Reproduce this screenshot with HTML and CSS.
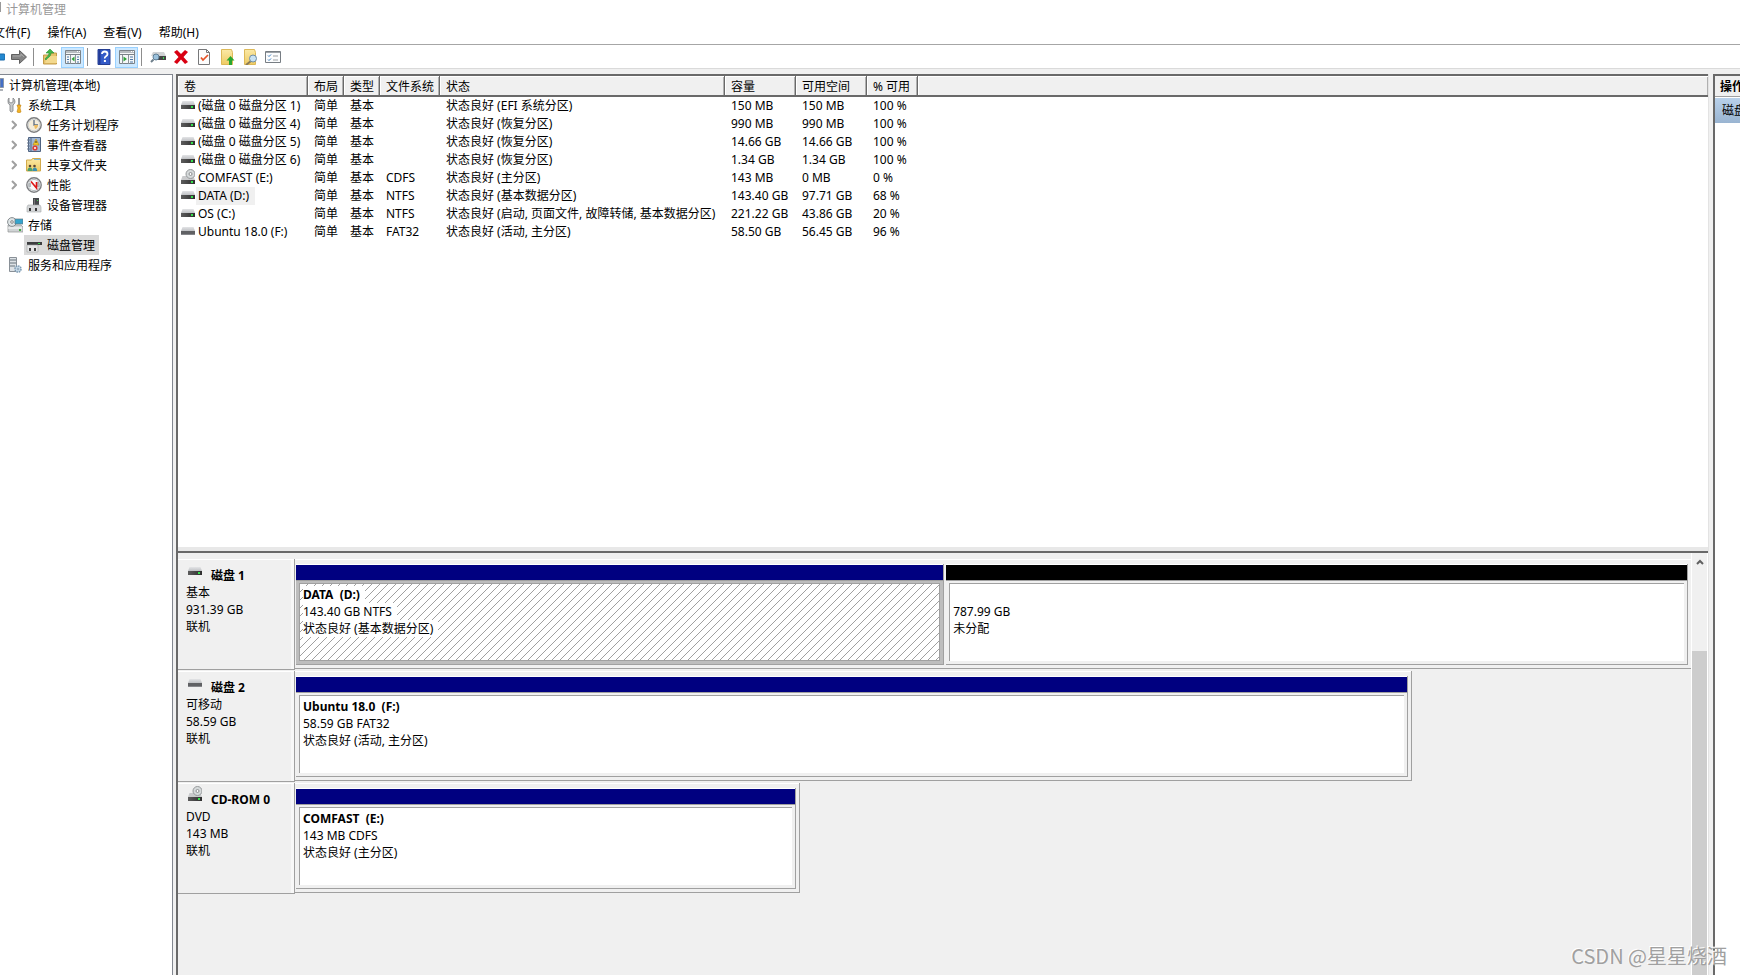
FILE: index.html
```
<!DOCTYPE html>
<html lang="zh-CN">
<head>
<meta charset="utf-8">
<title>计算机管理</title>
<link rel="stylesheet" href="styles.css">
</head>
<body>
<svg class="defs" aria-hidden="true">
  <defs>
    <linearGradient id="metal" x1="0" y1="0" x2="0" y2="1"><stop offset="0" stop-color="#e3e4e6"/><stop offset="1" stop-color="#bfc1c4"/></linearGradient>
    <linearGradient id="folder" x1="0" y1="0" x2="0" y2="1"><stop offset="0" stop-color="#fbe9a6"/><stop offset="1" stop-color="#eecb63"/></linearGradient>
    <linearGradient id="dark" x1="0" y1="0" x2="1" y2="0"><stop offset="0" stop-color="#5d5d5d"/><stop offset="1" stop-color="#2e2e2e"/></linearGradient>
  </defs>
  <symbol id="drive" viewBox="0 0 14 9"><path d="M1.500 0h11L14 4H0z" fill="url(#metal)"/><path d="M0 4h14v4H0z" fill="url(#dark)"/><path d="M10 5h2v2h-2z" fill="#35e04c"/></symbol>
  <symbol id="removable" viewBox="0 0 14 9"><path d="M1.500 0h11L14 4H0z" fill="url(#metal)"/><path d="M0 4h14v4H0z" fill="#606164"/><path d="M0 7h14v1H0z" fill="#85868a"/></symbol>
  <symbol id="cd" viewBox="0 0 14 15"><path d="M1.500 7h11L14 11H0z" fill="#c9cacc"/><circle cx="9.500" cy="5" r="4.500" fill="#d6dadb" stroke="#96999b"/><circle cx="9.500" cy="5" r="1.500" fill="#fff" stroke="#8c8f91"/><path d="M0 11h14v4H0z" fill="url(#dark)"/><path d="M10 12h2v2h-2z" fill="#35e04c"/></symbol>
</svg>

<header class="title"><span class="title-mark"></span><h1>计算机管理</h1></header>
<nav class="menu">
  <button>文件(F)</button><button>操作(A)</button><button>查看(V)</button><button>帮助(H)</button>
</nav>
<div class="toolbar" role="toolbar">
  <button class="tool back" aria-label="后退"><svg viewBox="0 0 16 16"><path d="M8 5h7q1 0 1 1v4q0 1-1 1H8z" fill="#2488cf" stroke="#1769a9"/></svg></button>
  <button class="tool" aria-label="前进"><svg viewBox="0 0 16 16"><path d="M.500 5.500h8v-4L15.500 8l-7 6.500v-4h-8z" fill="#858585" stroke="#606060"/><path d="M2 7h8V5l3 3" fill="none" stroke="#a8a8a8"/></svg></button>
  <span class="sep"></span>
  <button class="tool" aria-label="向上"><svg viewBox="0 0 16 16"><path d="M1.500 15V6h6l1-2h6v11z" fill="#e6c46b" stroke="#c39a48"/><path d="M3 14l2-7h10v7z" fill="#f3d98e"/><path d="M3 10C4 8 7 7 7 4H4l4-4 4 4H9C9 8 6 8 4 11z" fill="#43b649" stroke="#2d9138" stroke-width=".6"/></svg></button>
  <button class="tool on" aria-label="显示/隐藏控制台树"><svg viewBox="0 0 16 14"><path d="M.500.500h15v13H.500z" fill="#f5f7f8" stroke="#7b8288"/><path d="M1 2h14M1 4.500h14" stroke="#7b8288"/><path d="M12 1.500h1M14 1.500h1" stroke="#fff"/><path d="M5.500 5v9M10.500 5v9" stroke="#8b9298"/><path d="M2 7h2M2 9.500h2M2 12h2M12 7h2M12 9.500h2M12 12h2" stroke="#4c78a8"/><path d="M9.500 6.500v5L6.500 9z" fill="#2da337"/></svg></button>
  <span class="sep"></span>
  <button class="tool" aria-label="帮助"><svg viewBox="0 0 13 16"><path d="M.500.500h12v15H.500z" fill="#345bc8" stroke="#253e92"/><path d="M1 1h2v14H1z" fill="#233b96"/><path d="M4.500 5Q4.500 2.500 7.200 2.500T10 5Q10 6.300 8.500 7.200T7.300 9.500" fill="none" stroke="#fff" stroke-width="1.800"/><path d="M6.400 11h2v2h-2z" fill="#fff"/></svg></button>
  <button class="tool on" aria-label="显示/隐藏操作窗格"><svg viewBox="0 0 16 14"><path d="M.500.500h15v13H.500z" fill="#f5f7f8" stroke="#7b8288"/><path d="M1 2h14M1 4.500h14" stroke="#7b8288"/><path d="M12 1.500h1M14 1.500h1" stroke="#fff"/><path d="M9.500 5v9M3.500 5v9" stroke="#8b9298"/><path d="M11 7h3M11 9.500h3M11 12h3" stroke="#4c78a8"/><path d="M4.500 6.500v5L8 9z" fill="#2da337"/></svg></button>
  <span class="sep"></span>
  <button class="tool" aria-label="刷新"><svg viewBox="0 0 16 16"><path d="M3 3h11l2 4H1z" fill="#d0d2d4"/><path d="M5 7h11v4H5z" fill="#444"/><path d="M13 8h1v2h-1z" fill="#35e04c"/><circle cx="6" cy="8" r="3" fill="#9bc1dc" stroke="#5f7f96"/><path d="M3.500 10.500L1 13" stroke="#6e7f8b" stroke-width="2"/></svg></button>
  <button class="tool" aria-label="删除"><svg viewBox="0 0 16 16"><path d="M1 3l3-2 4 4 4-4 3 2-4.500 5L15 13l-3 2-4-4.500L4 15l-3-2 4.500-5z" fill="#d90012"/></svg></button>
  <button class="tool" aria-label="属性"><svg viewBox="0 0 16 16"><path d="M2.500.500h8l3 3v12h-11z" fill="#fdfdfd" stroke="#77787a"/><path d="M10.500.500v3h3" fill="none" stroke="#77787a"/><path d="M5 8.500L7 11l5-5" fill="none" stroke="#e65428" stroke-width="1.700"/></svg></button>
  <button class="tool" aria-label="打开"><svg viewBox="0 0 16 16"><path d="M2.500.500h10l1 3v12h-11z" fill="url(#folder)" stroke="#ddb958"/><path d="M11.500 7l4 4.500h-2.500V16h-3v-4.500H7.500z" fill="#28a52e"/></svg></button>
  <button class="tool" aria-label="浏览"><svg viewBox="0 0 16 16"><path d="M2.500.500h10l1 3v12h-11z" fill="url(#folder)" stroke="#ddb958"/><path d="M9 12l-5 4" stroke="#8b7b58" stroke-width="2"/><circle cx="11" cy="9.500" r="3.500" fill="#c8e2f4" stroke="#6f8ea5"/></svg></button>
  <button class="tool" aria-label="选项"><svg viewBox="0 0 16 14"><path d="M.500 1.500h15v11H.500z" fill="#fbfcfd" stroke="#777d83"/><path d="M1 2.500h14" stroke="#9ba1a7"/><path d="M3 5.500l1 1 2-2M3 9.500l1 1 2-2" fill="none" stroke="#3478bd"/><path d="M8 6h5M8 10h5" stroke="#9b9fa3"/></svg></button>
</div>

<main class="workspace">
  <aside class="tree">
    <ul>
      <li class="root"><svg class="root-icon" viewBox="0 0 4 14"><path d="M0 .500h3.500v9H0z" fill="#446fc7" stroke="#8b98a8"/><path d="M0 11h3v2H0z" fill="#aeb2b8"/></svg><button>计算机管理(本地)</button></li>
      <li class="group"><svg viewBox="0 0 16 16"><path d="M2 1v4l2 1 2-1V1q2 1 2 4-.500 2-2 3v6q-2 2-3 0V8Q.500 7 1 3.500 1 2 2 1z" fill="#c6c9cb" stroke="#7f8284" stroke-width=".8"/><path d="M12 1v7" stroke="#777" stroke-width="1.500"/><path d="M10 8h4l-1 3 1 4q-2 1.500-4 0l1-4z" fill="#f2b324" stroke="#c48211" stroke-width=".6"/></svg><button>系统工具</button></li>
      <li class="leaf"><svg class="arrow" viewBox="0 0 6 10"><path d="M1 1l4 4-4 4"/></svg><svg viewBox="0 0 16 16"><circle cx="8" cy="8" r="7.200" fill="#f5edda" stroke="#7d7f82" stroke-width="1.400"/><circle cx="8" cy="8" r="5.800" fill="none" stroke="#cfd3d5"/><path d="M8 3v5h4" fill="none" stroke="#5b6c80" stroke-width="1.300"/><path d="M8 8h4q0 3-3 4z" fill="#edbd63"/></svg><button>任务计划程序</button></li>
      <li class="leaf"><svg class="arrow" viewBox="0 0 6 10"><path d="M1 1l4 4-4 4"/></svg><svg viewBox="0 0 16 16"><path d="M2.500.500h12v14h-12z" fill="#9fb6d4" stroke="#4e6280"/><path d="M5 1v13" stroke="#536988"/><path d="M1 3h3M1 6h3M1 9h3M1 12h3" stroke="#68798f"/><path d="M10 2l3 6H7z" fill="#f4c92c" stroke="#b8860b" stroke-width=".6"/><path d="M10 4v2" stroke="#333"/><circle cx="9" cy="11" r="2.600" fill="#dc3c35"/><circle cx="9" cy="11" r="1" fill="#fff"/></svg><button>事件查看器</button></li>
      <li class="leaf"><svg class="arrow" viewBox="0 0 6 10"><path d="M1 1l4 4-4 4"/></svg><svg viewBox="0 0 16 16"><path d="M.500 14V3h5l1-1.500h8V14z" fill="url(#folder)" stroke="#d2aa4b"/><path d="M8 2.500h6" stroke="#7fb7d8"/><circle cx="4" cy="9" r="1.300" fill="#5a4636"/><circle cx="8.500" cy="9" r="1.300" fill="#5a4636"/><path d="M1.500 14q0-3.500 2.500-3.500t2.500 3.500z" fill="#4b9e6b"/><path d="M6.500 14q0-3.500 2.300-3.500t2.300 3.500z" fill="#3a8fae"/></svg><button>共享文件夹</button></li>
      <li class="leaf"><svg class="arrow" viewBox="0 0 6 10"><path d="M1 1l4 4-4 4"/></svg><svg viewBox="0 0 16 16"><circle cx="8" cy="8" r="7.200" fill="#fafafa" stroke="#7d7f82" stroke-width="1.400"/><circle cx="8" cy="8" r="5.600" fill="none" stroke="#b9bec1"/><path d="M4 10V6M12 10V5" fill="none" stroke="#737c82"/><path d="M5 4.500l5.500 6.500V5" fill="none" stroke="#dd1515" stroke-width="1.600"/></svg><button>性能</button></li>
      <li class="leaf"><span class="arrow"></span><svg viewBox="0 0 16 16"><path d="M7 1h6v8H7z" fill="#47494c"/><path d="M8 2h1v6H8z" fill="#777"/><path d="M11 3h1v1h-1z" fill="#49cc54"/><path d="M2 8h12l1 2v5H1v-5z" fill="#d5d7d9" stroke="#a5a7a9" stroke-width=".6"/><path d="M3 11h2v3H3zM9 11h2v3H9z" fill="#3b3b3b"/></svg><button>设备管理器</button></li>
      <li class="group"><svg viewBox="0 0 16 16"><path d="M1 8h13l2 2v5H1z" fill="#d0d3d5" stroke="#8f9294" stroke-width=".7"/><circle cx="5" cy="5" r="4.400" fill="#dfe5e7" stroke="#888e92"/><circle cx="5" cy="5" r="1.300" fill="#fff" stroke="#888"/><path d="M8 2h8v5H8z" fill="#35a4cd" stroke="#667780" stroke-width=".7"/><path d="M1 11h14" stroke="#fff"/><path d="M12 12h2v2h-2z" fill="#45a945"/></svg><button>存储</button></li>
      <li class="leaf"><span class="arrow"></span><div class="selected"><svg viewBox="0 0 16 16"><path d="M3 2h11l2 3H1z" fill="#d5d7d8"/><path d="M1 5h15v3H1z" fill="#3d3e40"/><path d="M12 6h2v1h-2z" fill="#35e04c"/><path d="M1 8h11v7H1z" fill="#e6e7e8" stroke="#a5a7a9" stroke-width=".6"/><path d="M3 11h2v3H3zM8 11h2v3H8z" fill="#404040"/></svg><button>磁盘管理</button></div></li>
      <li class="group"><svg viewBox="0 0 16 16"><path d="M2.500.500h7v14h-7z" fill="#dde2e6" stroke="#899097"/><path d="M3 3h6M3 6h6M3 9h5" stroke="#66727b"/><circle cx="11" cy="12" r="3" fill="#d8e8f4" stroke="#7c9ab2" stroke-width="1.500" stroke-dasharray="1.600 .7"/><circle cx="11" cy="12" r="1" fill="#fff" stroke="#7c9ab2"/></svg><button>服务和应用程序</button></li>
    </ul>
  </aside>

  <section class="center">
    <div class="volumes">
      <table>
        <colgroup><col class="c-name"><col class="c-short"><col class="c-short"><col class="c-fs"><col class="c-status"><col class="c-size"><col class="c-size"><col class="c-pct"><col></colgroup>
        <thead><tr><th>卷</th><th>布局</th><th>类型</th><th>文件系统</th><th>状态</th><th>容量</th><th>可用空间</th><th>% 可用</th><th></th></tr></thead>
        <tbody>
          <tr><td><svg class="drive"><use href="#drive"/></svg><span>(磁盘 0 磁盘分区 1)</span></td><td>简单</td><td>基本</td><td></td><td>状态良好 (EFI 系统分区)</td><td>150 MB</td><td>150 MB</td><td>100 %</td><td></td></tr>
          <tr><td><svg class="drive"><use href="#drive"/></svg><span>(磁盘 0 磁盘分区 4)</span></td><td>简单</td><td>基本</td><td></td><td>状态良好 (恢复分区)</td><td>990 MB</td><td>990 MB</td><td>100 %</td><td></td></tr>
          <tr><td><svg class="drive"><use href="#drive"/></svg><span>(磁盘 0 磁盘分区 5)</span></td><td>简单</td><td>基本</td><td></td><td>状态良好 (恢复分区)</td><td>14.66 GB</td><td>14.66 GB</td><td>100 %</td><td></td></tr>
          <tr><td><svg class="drive"><use href="#drive"/></svg><span>(磁盘 0 磁盘分区 6)</span></td><td>简单</td><td>基本</td><td></td><td>状态良好 (恢复分区)</td><td>1.34 GB</td><td>1.34 GB</td><td>100 %</td><td></td></tr>
          <tr><td><svg class="cd"><use href="#cd"/></svg><span>COMFAST (E:)</span></td><td>简单</td><td>基本</td><td>CDFS</td><td>状态良好 (主分区)</td><td>143 MB</td><td>0 MB</td><td>0 %</td><td></td></tr>
          <tr><td><svg class="drive"><use href="#drive"/></svg><span class="current">DATA (D:)</span></td><td>简单</td><td>基本</td><td>NTFS</td><td>状态良好 (基本数据分区)</td><td>143.40 GB</td><td>97.71 GB</td><td>68 %</td><td></td></tr>
          <tr><td><svg class="drive"><use href="#drive"/></svg><span>OS (C:)</span></td><td>简单</td><td>基本</td><td>NTFS</td><td>状态良好 (启动, 页面文件, 故障转储, 基本数据分区)</td><td>221.22 GB</td><td>43.86 GB</td><td>20 %</td><td></td></tr>
          <tr><td><svg class="drive"><use href="#removable"/></svg><span>Ubuntu 18.0 (F:)</span></td><td>简单</td><td>基本</td><td>FAT32</td><td>状态良好 (活动, 主分区)</td><td>58.50 GB</td><td>56.45 GB</td><td>96 %</td><td></td></tr>
        </tbody>
      </table>
    </div>

    <div class="lower">
      <div class="disks">
        <article class="disk">
          <div class="label"><h2><svg class="drive"><use href="#drive"/></svg>磁盘 1</h2><p>基本</p><p>931.39 GB</p><p>联机</p></div>
          <div class="graph full">
            <div class="part picked" style="flex-grow:649"><div class="bar"></div><div class="box"><p><b>DATA&nbsp; (D:)</b></p><p><span>143.40 GB NTFS</span></p><p><span>状态良好 (基本数据分区)</span></p></div></div>
            <div class="part free" style="flex-grow:743"><div class="bar"></div><div class="box"><p>&nbsp;</p><p>787.99 GB</p><p>未分配</p></div></div>
          </div>
        </article>
        <article class="disk">
          <div class="label"><h2><svg class="drive"><use href="#removable"/></svg>磁盘 2</h2><p>可移动</p><p>58.59 GB</p><p>联机</p></div>
          <div class="track"><div class="graph" style="width:80%">
            <div class="part"><div class="bar"></div><div class="box"><p><b>Ubuntu 18.0&nbsp; (F:)</b></p><p>58.59 GB FAT32</p><p>状态良好 (活动, 主分区)</p></div></div>
          </div></div>
        </article>
        <article class="disk">
          <div class="label"><h2><svg class="cd"><use href="#cd"/></svg>CD-ROM 0</h2><p>DVD</p><p>143 MB</p><p>联机</p></div>
          <div class="track"><div class="graph" style="width:36.2%">
            <div class="part"><div class="bar"></div><div class="box"><p><b>COMFAST&nbsp; (E:)</b></p><p>143 MB CDFS</p><p>状态良好 (主分区)</p></div></div>
          </div></div>
        </article>
      </div>
      <div class="scroll"><button aria-label="向上滚动"><svg viewBox="0 0 8 6"><path d="M1 5l3-3 3 3" fill="none" stroke="#606060" stroke-width="2"/></svg></button><div class="thumb"></div></div>
    </div>
  </section>

  <aside class="actions"><h2>操作</h2><button>磁盘</button></aside>
</main>
<div class="watermark">CSDN @星星烧酒</div>
</body>
</html>
```
FILE: styles.css
```
* { box-sizing: border-box; }
body {
  margin: 0;
  height: 100vh;
  display: flex;
  flex-direction: column;
  overflow: hidden;
  position: relative;
  background: #fff;
  color: #000;
  font: 12px/17px "Noto Sans", "Noto Sans CJK SC", sans-serif;
}
h1, h2, p, ul { margin: 0; padding: 0; font-size: 12px; }
button { margin: 0; padding: 0; border: 0; background: none; color: inherit; font: inherit; white-space: nowrap; }
svg { display: block; flex: none; }
.defs { position: absolute; width: 0; height: 0; }

.title { flex: none; height: 19px; display: flex; align-items: center; gap: 5px; color: #999; }
.title h1 { font-weight: 400; }
.title-mark { width: 1px; height: 10px; margin-bottom: 6px; background: #999; }
.menu { flex: none; height: 26px; display: flex; align-items: center; gap: 17px; margin-left: -7px; padding-top: 2px; border-bottom: 1px solid #a6a6a6; }

.toolbar { flex: none; height: 24px; display: flex; align-items: center; margin-left: -13px; padding-top: 1px; border-bottom: 1px solid #dadada; }
.tool { width: 23px; height: 21px; display: grid; place-items: center; }
.tool.back { width: 20px; }
.tool svg { width: 16px; height: 16px; }
.tool.on { background: #cce8ff; border: 1px solid #99d1ff; }
.sep { width: 1px; height: 18px; margin: 0 4px 0 3px; background: #8d8d8d; }

.workspace { flex: 1; min-height: 0; display: flex; gap: 3px; padding-top: 5px; background: #f0f0f0; }
.tree { flex: none; width: 173px; background: #fff; border: solid #828790; border-width: 1px 1px 0 0; }
.tree ul { list-style: none; }
.tree li { height: 20px; display: flex; align-items: center; gap: 4px; }
.tree svg { width: 16px; height: 16px; }
.tree .root { gap: 5px; }
.tree .root-icon { width: 4px; height: 14px; }
.tree .group { padding-left: 7px; gap: 5px; }
.tree .leaf { padding-left: 11px; gap: 9px; }
.tree .leaf svg + svg, .tree span + svg { margin-right: -4px; }
.tree .arrow { width: 6px; height: 10px; fill: none; stroke: #a0a0a0; stroke-width: 2; }
.selected { height: 20px; display: flex; align-items: center; gap: 5px; margin-left: -2px; padding: 0 4px 0 2px; background: #d9d9d9; }

.center { flex: 1; min-width: 0; display: flex; flex-direction: column; border: solid #696969; border-width: 0 1px 0 2px; border-right-color: #e3e3e3; }
.volumes { flex: none; height: 479px; background: #fff; border-top: 2px solid #696969; border-bottom: 2px solid #696969; box-shadow: inset 0 -4px #e8e8e8; }
.volumes table { width: 100%; table-layout: fixed; border-collapse: separate; border-spacing: 0; }
.c-name { width: 130px; }
.c-short { width: 36px; }
.c-fs { width: 60px; }
.c-status { width: 285px; }
.c-size { width: 71px; }
.c-pct { width: 51px; }
th { height: 21px; padding: 2px 0 0 6px; line-height: 17px; text-align: left; font-weight: 400; background: #f0f0f0; border: solid #696969; border-width: 0 1px 2px 0; box-shadow: inset 1px 1px #fff, inset -1px 0 #b0b0b0; white-space: nowrap; }
th:last-child { border-right: 0; }
td { height: 18px; padding: 0 0 0 6px; line-height: 18px; white-space: nowrap; }
td:first-child { display: flex; align-items: center; padding-left: 3px; }
td span { margin-left: 1px; padding: 0 6px 0 2px; }
.current { background: #f0f0f0; }
.drive { width: 14px; height: 9px; }
.cd { width: 14px; height: 15px; }
td .drive { margin-bottom: 2px; }
td .cd { margin-bottom: 3px; }

.lower { flex: 1; min-height: 0; display: flex; background: #f0f0f0; }
.disks { flex: 1; min-width: 0; padding-top: 6px; }
.disk { height: 112px; display: flex; align-items: flex-start; }
.label { flex: none; width: 117px; height: 111px; padding: 8px 0 0 8px; border: solid #a0a0a0; border-width: 0 1px 1px 0; box-shadow: inset 0 1px #fff, inset -3px 0 #f8f8f8; }
.label h2 { display: flex; gap: 9px; padding-left: 2px; font-weight: 700; }
.label h2 .cd { margin-top: -5px; }
.track { flex: 1; }
.graph { flex: 1; display: flex; gap: 2px; height: 110px; padding: 5px 3px 3px 1px; border: solid #a0a0a0; border-width: 0 1px 1px 0; box-shadow: inset 0 1px #fff; }
.graph.full { border-right: 0; }
.part { flex: 1 1 0; min-width: 0; display: flex; flex-direction: column; border: solid #a0a0a0; border-width: 0 1px 1px 0; box-shadow: inset 0 1px #fff; }
.bar { flex: none; height: 17px; background: #000080; border-top: 1px solid #fff; border-bottom: 1px solid #a0a0a0; }
.free .bar { background: #000; }
.box { flex: 1; margin: 2px 3px 3px 3px; padding: 2px 0 0 3px; background: #fff; border: solid #a0a0a0; border-width: 1px 0 0 1px; }
.picked { background: #bdbdbd; }
.picked .box { border: 1px solid #a0a0a0; background: #fff url("data:image/svg+xml,%3Csvg xmlns='http://www.w3.org/2000/svg' width='8' height='8'%3E%3Cpath fill='%23a0a0a0' d='M7 0h1v1h-1zM6 1h1v1h-1zM5 2h1v1h-1zM4 3h1v1h-1zM3 4h1v1h-1zM2 5h1v1h-1zM1 6h1v1h-1zM0 7h1v1h-1z'/%3E%3C/svg%3E"); }
.picked b, .picked span { display: inline-block; padding-right: 5px; background: #fff; }
.scroll { flex: none; width: 17px; display: flex; flex-direction: column; border: solid #fff; border-width: 0 1px; }
.scroll button { flex: none; height: 17px; display: grid; place-items: center; }
.scroll svg { width: 8px; height: 6px; }
.thumb { flex: 1; margin-top: 81px; background: #cdcdcd; }

.actions { flex: none; width: 27px; margin-left: 1px; overflow: hidden; background: #fff; border: solid #696969; border-width: 2px 0 0 2px; }
.actions h2 { height: 21px; padding: 2px 0 0 5px; white-space: nowrap; background: #f0f0f0; border-bottom: 1px solid #a0a0a0; }
.actions button { display: block; width: 100%; height: 25px; margin-top: 1px; padding-left: 7px; text-align: left; background: linear-gradient(#b9d1ea, #99b4d1); }
.watermark { position: absolute; right: 13px; bottom: 5px; font: 20px/28px "Noto Sans CJK SC", sans-serif; color: #a0a0a0; text-shadow: -1px -1px #fff; }
```
